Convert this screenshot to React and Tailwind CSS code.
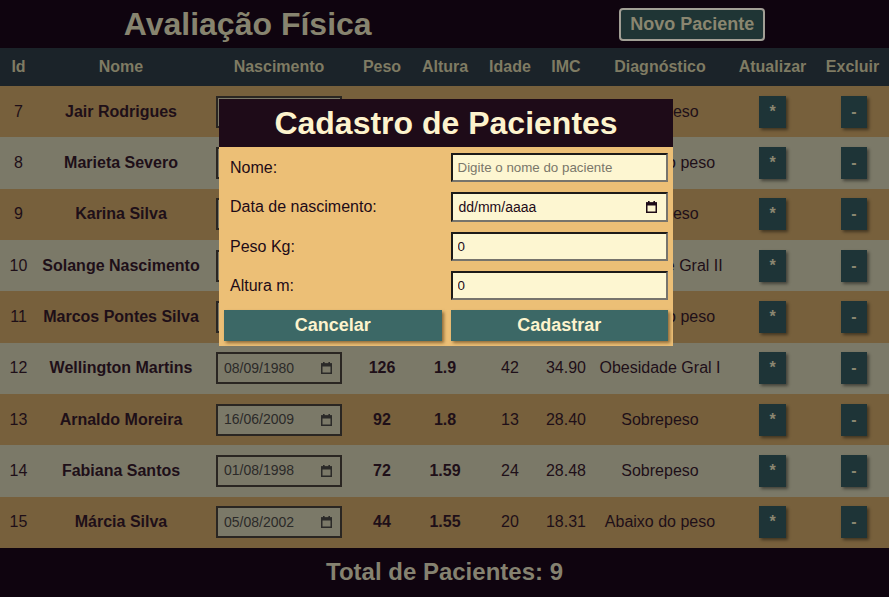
import React from 'react';

const pacientes = [
  { id: 7, nome: 'Jair Rodrigues', nasc: '01/05/1990', peso: '85', altura: '1.75', idade: 35, imc: '27.76', diag: 'Sobrepeso' },
  { id: 8, nome: 'Marieta Severo', nasc: '12/03/1985', peso: '50', altura: '1.68', idade: 40, imc: '17.72', diag: 'Abaixo do peso' },
  { id: 9, nome: 'Karina Silva', nasc: '20/07/1995', peso: '70', altura: '1.6', idade: 30, imc: '27.34', diag: 'Sobrepeso' },
  { id: 10, nome: 'Solange Nascimento', nasc: '15/10/1978', peso: '105', altura: '1.65', idade: 47, imc: '38.57', diag: 'Obesidade Gral II' },
  { id: 11, nome: 'Marcos Pontes Silva', nasc: '03/02/2000', peso: '55', altura: '1.78', idade: 25, imc: '17.36', diag: 'Abaixo do peso' },
  { id: 12, nome: 'Wellington Martins', nasc: '08/09/1980', peso: '126', altura: '1.9', idade: 42, imc: '34.90', diag: 'Obesidade Gral I' },
  { id: 13, nome: 'Arnaldo Moreira', nasc: '16/06/2009', peso: '92', altura: '1.8', idade: 13, imc: '28.40', diag: 'Sobrepeso' },
  { id: 14, nome: 'Fabiana Santos', nasc: '01/08/1998', peso: '72', altura: '1.59', idade: 24, imc: '28.48', diag: 'Sobrepeso' },
  { id: 15, nome: 'Márcia Silva', nasc: '05/08/2002', peso: '44', altura: '1.55', idade: 20, imc: '18.31', diag: 'Abaixo do peso' },
];

const cols = 'grid grid-cols-[37px_168px_148px_58px_68px_62px_50px_138px_87px_73px]';

function CalendarIcon() {
  return (
    <svg width="11" height="12" viewBox="0 0 11 12" fill="currentColor">
      <rect x="2" y="0" width="1.6" height="2" />
      <rect x="7.4" y="0" width="1.6" height="2" />
      <rect x="0" y="1.5" width="11" height="3" />
      <rect x="0.75" y="2" width="9.5" height="9.25" fill="none" stroke="currentColor" strokeWidth="1.5" />
    </svg>
  );
}

function DateField({ value }) {
  return (
    <div className="flex h-[32px] w-[126px] items-center justify-between border-2 border-[#2a2622] bg-[#7b7968] pl-[6px] pr-[8px] text-[14px] text-[#2b2a28]">
      <span>{value}</span>
      <span className="text-[#2b2a28]">
        <CalendarIcon />
      </span>
    </div>
  );
}

function Linha({ p, i }) {
  return (
    <div className={`${cols} h-[51.33px] items-center text-center text-[16px] text-[#1e0f18] ${i % 2 === 0 ? 'bg-[#77603c]' : 'bg-[#7b7968]'}`}>
      <div>{p.id}</div>
      <div className="font-bold">{p.nome}</div>
      <div className="flex justify-center">
        <DateField value={p.nasc} />
      </div>
      <div className="font-bold">{p.peso}</div>
      <div className="font-bold">{p.altura}</div>
      <div>{p.idade}</div>
      <div>{p.imc}</div>
      <div>{p.diag}</div>
      <div className="flex justify-center">
        <button className="h-[32px] w-[27px] bg-[#1e3437] text-[16px] font-bold text-[#8a8670] shadow-[2px_2px_3px_rgba(0,0,0,0.45)]">*</button>
      </div>
      <div className="flex justify-center pl-[3px]">
        <button className="h-[32px] w-[26px] bg-[#1e3437] text-[16px] font-bold text-[#8a8670] shadow-[2px_2px_3px_rgba(0,0,0,0.45)]">-</button>
      </div>
    </div>
  );
}

const inputCls =
  'h-[29px] w-full border-2 border-t-[#1c1a18] border-l-[#1c1a18] border-b-[#77746c] border-r-[#77746c] bg-[#fdf6d1] pl-[5px] text-[13.33px] text-[#1e0b18] outline-none placeholder:text-[#7a776a]';

function Modal() {
  return (
    <div className="absolute left-[219px] top-[99px] w-[454px] bg-[#ecbf76]">
      <h2 className="h-[48px] bg-[#1e0b18] text-center text-[32px] font-bold leading-[48px] text-[#fdf3cd]">Cadastro de Pacientes</h2>
      <div className="grid grid-cols-2 items-center gap-x-[9px] gap-y-[10px] px-[5px] pb-[5px] pt-[6px] text-[16px] text-[#1e0b18]">
        <label className="pl-[6px]">Nome:</label>
        <input className={inputCls} placeholder="Digite o nome do paciente" />
        <label className="pl-[6px]">Data de nascimento:</label>
        <div className="flex h-[30px] items-center justify-between border-2 border-t-[#1c1a18] border-l-[#1c1a18] border-b-[#77746c] border-r-[#77746c] bg-[#fdf6d1] pl-[6px] pr-[9px] text-[14px] text-[#1e0b18]">
          <span>dd/mm/aaaa</span>
          <CalendarIcon />
        </div>
        <label className="pl-[6px]">Peso Kg:</label>
        <input className={inputCls} defaultValue="0" />
        <label className="pl-[6px]">Altura m:</label>
        <input className={inputCls} defaultValue="0" />
        <button className="h-[31px] bg-[#3c6866] text-[18px] font-bold text-[#fdf3cd] shadow-[2px_2px_3px_rgba(70,40,10,0.55)]">Cancelar</button>
        <button className="h-[31px] bg-[#3c6866] text-[18px] font-bold text-[#fdf3cd] shadow-[2px_2px_3px_rgba(70,40,10,0.55)]">Cadastrar</button>
      </div>
    </div>
  );
}

export default function App() {
  return (
    <div className="relative h-[597px] overflow-hidden bg-[#0f040f] font-['Liberation_Sans',Arial,sans-serif]">
      <header className="flex h-[48px] items-center justify-around">
        <h1 className="text-[32px] font-bold leading-none text-[#87846f]">Avaliação Física</h1>
        <button className="rounded-[4px] border-2 border-[#a19f95] bg-[#1f3535] px-[9px] py-[4px] text-[18px] font-bold leading-[21px] text-[#8a8670]">
          Novo Paciente
        </button>
      </header>

      <div className={`${cols} h-[38px] items-center bg-[#1b2329] text-center text-[16px] font-bold text-[#7f7b63]`}>
        <div>Id</div>
        <div>Nome</div>
        <div>Nascimento</div>
        <div>Peso</div>
        <div>Altura</div>
        <div>Idade</div>
        <div>IMC</div>
        <div>Diagnóstico</div>
        <div>Atualizar</div>
        <div>Excluir</div>
      </div>

      {pacientes.map((p, i) => (
        <Linha key={p.id} p={p} i={i} />
      ))}

      <footer className="flex h-[49px] items-center justify-center text-[24px] font-bold text-[#858270]">
        Total de Pacientes: 9
      </footer>

      <Modal />
    </div>
  );
}
